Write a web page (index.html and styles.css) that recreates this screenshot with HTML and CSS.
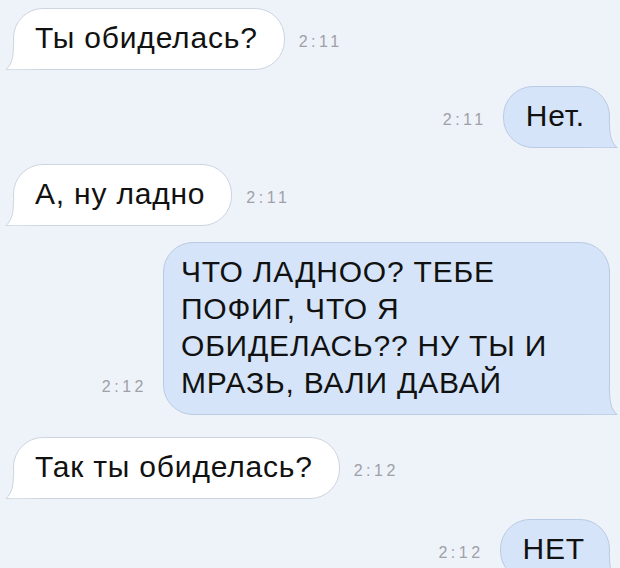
FILE: index.html
```html
<!DOCTYPE html>
<html lang="ru">

<head>
    <meta charset="UTF-8">
    <meta name="viewport" content="width=device-width, initial-scale=1.0">
    <title>Сообщения</title>
    <link rel="stylesheet" href="styles.css">
</head>

<body>

    <div class="chat">
        <div class="row in">
            <div class="bubble">
                <svg class="tail" width="40" height="26" viewBox="0 0 40 26"><path d="M8.5 0 C8.5 13 7 20 1 25.5 C12 26 24 25.5 40 25.5 L40 0 Z" fill="#fff"/><path d="M8.5 0 C8.5 13 7 20 1 25.5 C12 26 24 25.5 40 25.5" fill="none" stroke="#cdd5e1"/></svg>
                <span class="text">Ты обиделась?</span>
            </div>
            <span class="time">2:11</span>
        </div>

        <div class="row out">
            <span class="time">2:11</span>
            <div class="bubble">
                <svg class="tail" width="40" height="26" viewBox="0 0 40 26"><path d="M8.5 0 C8.5 13 7 20 1 25.5 C12 26 24 25.5 40 25.5 L40 0 Z" fill="#d5e4f8"/><path d="M8.5 0 C8.5 13 7 20 1 25.5 C12 26 24 25.5 40 25.5" fill="none" stroke="#b9cbe3"/></svg>
                <span class="text">Нет.</span>
            </div>
        </div>

        <div class="row in">
            <div class="bubble">
                <svg class="tail" width="40" height="26" viewBox="0 0 40 26"><path d="M8.5 0 C8.5 13 7 20 1 25.5 C12 26 24 25.5 40 25.5 L40 0 Z" fill="#fff"/><path d="M8.5 0 C8.5 13 7 20 1 25.5 C12 26 24 25.5 40 25.5" fill="none" stroke="#cdd5e1"/></svg>
                <span class="text">А, ну ладно</span>
            </div>
            <span class="time">2:11</span>
        </div>

        <div class="row out">
            <span class="time">2:12</span>
            <div class="bubble long">
                <svg class="tail" width="40" height="26" viewBox="0 0 40 26"><path d="M8.5 0 C8.5 13 7 20 1 25.5 C12 26 24 25.5 40 25.5 L40 0 Z" fill="#d5e4f8"/><path d="M8.5 0 C8.5 13 7 20 1 25.5 C12 26 24 25.5 40 25.5" fill="none" stroke="#b9cbe3"/></svg>
                <span class="text">ЧТО ЛАДНОО? ТЕБЕ ПОФИГ, ЧТО Я ОБИДЕЛАСЬ?? НУ ТЫ И МРАЗЬ, ВАЛИ ДАВАЙ</span>
            </div>
        </div>

        <div class="row in after-long">
            <div class="bubble">
                <svg class="tail" width="40" height="26" viewBox="0 0 40 26"><path d="M8.5 0 C8.5 13 7 20 1 25.5 C12 26 24 25.5 40 25.5 L40 0 Z" fill="#fff"/><path d="M8.5 0 C8.5 13 7 20 1 25.5 C12 26 24 25.5 40 25.5" fill="none" stroke="#cdd5e1"/></svg>
                <span class="text">Так ты обиделась?</span>
            </div>
            <span class="time">2:12</span>
        </div>

        <div class="row out last">
            <span class="time">2:12</span>
            <div class="bubble">
                <svg class="tail" width="40" height="26" viewBox="0 0 40 26"><path d="M8.5 0 C8.5 13 7 20 1 25.5 C12 26 24 25.5 40 25.5 L40 0 Z" fill="#d5e4f8"/><path d="M8.5 0 C8.5 13 7 20 1 25.5 C12 26 24 25.5 40 25.5" fill="none" stroke="#b9cbe3"/></svg>
                <span class="text">НЕТ</span>
            </div>
        </div>
    </div>

</body>

</html>
```

FILE: styles.css
```css
body {
    font-family: "Liberation Sans", Arial, sans-serif;
    background-color: #eef2f9;
    margin: 0;
    padding: 0;
    height: 568px;
    overflow: hidden;
}

.chat {
    display: flex;
    flex-direction: column;
    gap: 16px;
    padding: 8px 10px 0 13px;
}

.row {
    display: flex;
    align-items: flex-end;
}

.row.out {
    justify-content: flex-end;
}

.row.after-long {
    margin-top: 6px;
}

.row.last {
    margin-top: 4px;
}

.bubble {
    position: relative;
    padding: 10px 26px 13px 21px;
    font-size: 30px;
    letter-spacing: 0.8px;
    line-height: 37px;
    color: #111;
    background-color: #fff;
    border: 1px solid #cdd5e1;
    border-radius: 30px;
    max-width: 404px;
}

.row.out .bubble {
    background-color: #d5e4f8;
    border-color: #b9cbe3;
    padding-left: 22px;
    padding-right: 24px;
}

.row.out .bubble.long {
    padding-left: 17px;
}

.text {
    position: relative;
}

.tail {
    position: absolute;
    left: -9px;
    bottom: -1px;
}

.row.out .tail {
    left: auto;
    right: -9px;
    transform: scaleX(-1);
}

.time {
    font-size: 16px;
    letter-spacing: 3.5px;
    color: #9ea1a7;
    margin: 0 12px 19px 14px;
}

.row.out .time {
    margin-right: 16px;
}
```
